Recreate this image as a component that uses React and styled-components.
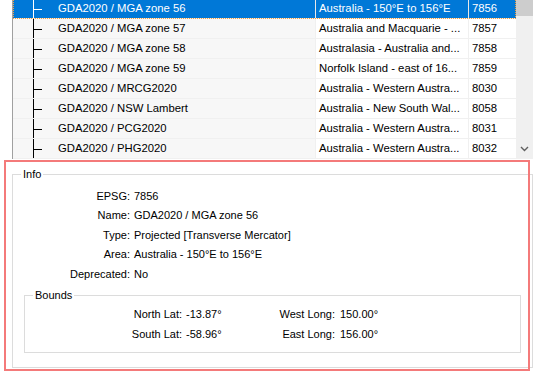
import React from 'react'
import styled, { createGlobalStyle } from 'styled-components'

const GlobalStyle = createGlobalStyle`
  html, body { margin: 0; padding: 0; background: #fff; }
  body { font-family: "Liberation Sans", Arial, sans-serif; color: #000; }
`

const rows = [
  { name: 'GDA2020 / MGA zone 56', area: 'Australia - 150°E to 156°E', code: '7856', selected: true },
  { name: 'GDA2020 / MGA zone 57', area: 'Australia and Macquarie - ...', code: '7857' },
  { name: 'GDA2020 / MGA zone 58', area: 'Australasia - Australia and...', code: '7858' },
  { name: 'GDA2020 / MGA zone 59', area: 'Norfolk Island - east of 16...', code: '7859' },
  { name: 'GDA2020 / MRCG2020', area: 'Australia - Western Austra...', code: '8030' },
  { name: 'GDA2020 / NSW Lambert', area: 'Australia - New South Wal...', code: '8058' },
  { name: 'GDA2020 / PCG2020', area: 'Australia - Western Austra...', code: '8031' },
  { name: 'GDA2020 / PHG2020', area: 'Australia - Western Austra...', code: '8032' },
]

const Page = styled.div`
  position: relative;
  width: 539px;
  height: 379px;
  overflow: hidden;
  background: #fff;
`

const Tree = styled.div`
  display: flex;
  width: 521px;
  height: 159px;
  margin-left: 12px;
  border-left: 1px solid #a0a0a0;
  box-sizing: border-box;
  overflow: hidden;
`

const RowList = styled.div`
  flex: 1;
  margin-top: -1px;
`

const Row = styled.div`
  display: grid;
  grid-template-columns: 303px 153px 46px;
  height: 20px;
  box-sizing: border-box;
  border-bottom: 1px solid #f0f0f0;
  background: ${p => (p.$selected ? '#0078d7' : '#fff')};
  color: ${p => (p.$selected ? '#fff' : '#000')};
  outline: ${p => (p.$selected ? '1px dotted #f5a040' : 'none')};
  outline-offset: -1px;
  font-size: 11.3px;
  line-height: 19px;
`

const Cell = styled.div`
  position: relative;
  padding-left: ${p => p.$indent || 3}px;
  border-right: ${p => (p.$last ? 'none' : `1px solid ${p.$selected ? '#e8e8e8' : '#f0f0f0'}`)};
  background: ${p => (p.$shade && !p.$selected ? '#f7f7f7' : 'transparent')};
  white-space: nowrap;
  overflow: hidden;
`

const Connector = styled.span`
  position: absolute;
  left: 20px;
  top: 0;
  bottom: -1px;
  width: 8px;
  border-left: 1px solid ${p => (p.$selected ? '#fff' : '#000')};

  &::after {
    content: '';
    position: absolute;
    left: 0;
    top: 10px;
    width: 8px;
    height: 1px;
    background: ${p => (p.$selected ? '#fff' : '#000')};
  }
`

const Scrollbar = styled.div`
  width: 17px;
  background: #f0f0f0;
  display: flex;
  flex-direction: column;
  justify-content: space-between;
  align-items: center;
`

const Thumb = styled.div`
  width: 17px;
  height: 16px;
  background: #cdcdcd;
`

const ArrowButton = styled.div`
  height: 17px;
  display: flex;
  align-items: center;
  justify-content: center;
  padding-bottom: 2px;
`

const Group = styled.fieldset`
  margin: ${p => p.$margin};
  width: ${p => p.$width}px;
  box-sizing: border-box;
  border: 1px solid #dcdcdc;
  padding: ${p => p.$padding};
  min-inline-size: 0;
`

const Legend = styled.legend`
  margin-left: 8px;
  padding: 0 2px;
  font-size: 11px;
  line-height: 15px;
`

const InfoGrid = styled.div`
  display: grid;
  grid-template-columns: 117px auto;
  column-gap: 4px;
  grid-auto-rows: 19.5px;
  align-items: center;
  font-size: 11px;
  padding-top: 4px;
`

const BoundsGrid = styled.div`
  display: grid;
  grid-template-columns: 157px 70px 75px auto;
  column-gap: 4px;
  grid-auto-rows: 20px;
  align-items: center;
  font-size: 11px;
  padding-top: 1px;
`

const Label = styled.span`
  text-align: right;
  white-space: nowrap;
`

const Value = styled.span`
  white-space: nowrap;
  padding-left: ${p => p.$shift || 0}px;
`

const Highlight = styled.div`
  position: absolute;
  left: 4px;
  top: 160px;
  width: 526px;
  height: 211px;
  box-sizing: border-box;
  border: 2px solid #f47a7a;
  pointer-events: none;
`

const info = [
  ['EPSG:', '7856'],
  ['Name:', 'GDA2020 / MGA zone 56'],
  ['Type:', 'Projected [Transverse Mercator]'],
  ['Area:', 'Australia - 150°E to 156°E'],
  ['Deprecated:', 'No'],
]

export default function App() {
  return (
    <Page>
      <GlobalStyle />
      <Tree>
        <RowList>
          {rows.map(r => (
            <Row key={r.code} $selected={r.selected}>
              <Cell $indent={45} $shade $selected={r.selected}>
                <Connector $selected={r.selected} />
                {r.name}
              </Cell>
              <Cell $selected={r.selected}>{r.area}</Cell>
              <Cell $last $selected={r.selected}>{r.code}</Cell>
            </Row>
          ))}
        </RowList>
        <Scrollbar>
          <Thumb />
          <ArrowButton>
            <svg width="9" height="6" viewBox="0 0 9 6">
              <path d="M1 1 L4.5 4.5 L8 1" fill="none" stroke="#606060" strokeWidth="1.4" />
            </svg>
          </ArrowButton>
        </Scrollbar>
      </Tree>

      <Group $margin="8px 0 0 12px" $width={521} $padding="0 0 14px 0">
        <Legend>Info</Legend>
        <InfoGrid>
          {info.map(([k, v]) => (
            <React.Fragment key={k}>
              <Label>{k}</Label>
              <Value>{v}</Value>
            </React.Fragment>
          ))}
        </InfoGrid>
        <Group $margin="4px 0 0 11px" $width={497} $padding="0 0 8px 0">
          <Legend>Bounds</Legend>
          <BoundsGrid>
            <Label>North Lat:</Label>
            <Value>-13.87°</Value>
            <Label>West Long:</Label>
            <Value $shift={1}>150.00°</Value>
            <Label>South Lat:</Label>
            <Value>-58.96°</Value>
            <Label>East Long:</Label>
            <Value $shift={1}>156.00°</Value>
          </BoundsGrid>
        </Group>
      </Group>

      <Highlight />
    </Page>
  )
}
